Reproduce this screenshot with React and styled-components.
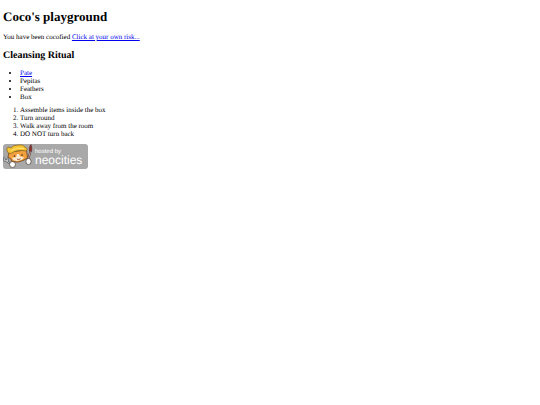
import React from "react";
import styled, { createGlobalStyle } from "styled-components";

const App = () => {
  return (
    <>
      <GlobalStyle />
      <Page>
        <Title>Coco's playground</Title>
        <Intro>
          You have been cocofied <Link href="#risk">Click at your own risk...</Link>
        </Intro>
        <Subtitle>Cleansing Ritual</Subtitle>
        <Items>
          <li>
            <Link href="#pate">Pate</Link>
          </li>
          <li>Pepitas</li>
          <li>Feathers</li>
          <li>Box</li>
        </Items>
        <Steps>
          <li>Assemble items inside the box</li>
          <li>Turn around</li>
          <li>Walk away from the room</li>
          <li>DO NOT turn back</li>
        </Steps>
        <BadgeLink href="#neocities">
          <Badge />
        </BadgeLink>
      </Page>
    </>
  );
};

const Badge = () => {
  return (
    <svg width="85" height="25" viewBox="0 0 85 25" role="img" aria-label="Hosted by Neocities">
      <rect width="85" height="25" rx="3" fill="#a8a8a8" />
      {/* wrench and its paw */}
      <path
        d="M1 13L1.5 16.5L4.5 17L5 13.5M3 16.5L9 21"
        stroke="#4a4d52"
        strokeWidth="2"
        fill="none"
      />
      <path
        d="M1 13L1.5 16.5L4.5 17L5 13.5M3 16.5L9 21"
        stroke="#e2e4e6"
        strokeWidth="0.8"
        fill="none"
      />
      <circle cx="9.5" cy="20.5" r="3" fill="#fff" stroke="#4a3a30" strokeWidth="0.7" />
      {/* cat head */}
      <path
        d="M6 8L5 13L8 15L8.5 17Q15 19.5 20 16.5L24.5 14L23.5 6Z"
        fill="#f2a03d"
        stroke="#6b4420"
        strokeWidth="0.8"
      />
      <path d="M9 14Q11 13 13 13.5L14 10L16 10L17 12.5Q20 12 21 14Q17 18 11 16.5Z" fill="#fbe9d3" />
      <path
        d="M4 7Q3.5 4 5 3L8 4Q10 1 15 1Q20 0 22 3L24.5 5L23 7Q14 5 8 9.5Q5 10 4 7Z"
        fill="#f6c434"
        stroke="#80601d"
        strokeWidth="0.7"
      />
      <path d="M8 6.5Q14 3 21 4.5" stroke="#ffe681" strokeWidth="0.9" fill="none" />
      <circle cx="11.5" cy="12" r="0.8" fill="#38251b" />
      <circle cx="19" cy="11" r="0.8" fill="#38251b" />
      <path d="M14 15Q16 16.5 17.5 14.5" stroke="#7a3d25" strokeWidth="0.8" fill="none" />
      {/* brush and its paw */}
      <path d="M25 16L27.5 7" stroke="#5b3230" strokeWidth="2" />
      <path d="M25 16L27.5 7" stroke="#e9d9d0" strokeWidth="0.7" />
      <path d="M26.5 7Q25.5 3 28 0.5Q29.5 4 28.5 7.5Z" fill="#8d2f2c" stroke="#552420" strokeWidth="0.5" />
      <ellipse cx="25.5" cy="17.5" rx="2.6" ry="3.1" fill="#fff" stroke="#4a3a30" strokeWidth="0.7" />
      <BadgeText x="32" y="9" $size={6}>
        hosted by
      </BadgeText>
      <BadgeText x="32" y="20" $size={12}>
        neocities
      </BadgeText>
    </svg>
  );
};

const GlobalStyle = createGlobalStyle`
  body {
    margin: 0;
    background: #fff;
    color: #000;
    font-family: "Liberation Serif", "Times New Roman", serif;
    font-size: 7px;
    line-height: 8px;
    text-rendering: geometricPrecision;
  }
`;

const Page = styled.main`
  padding: 0 3px;
`;

const Title = styled.h1`
  margin: 9px 0 8px;
  font-size: 13px;
  line-height: 16px;
`;

const Intro = styled.p`
  margin: 8px 0;
`;

const Subtitle = styled.h2`
  margin: 9px 0 7px;
  font-size: 10px;
  line-height: 12px;
`;

const Items = styled.ul`
  margin: 7px 0 5px;
  padding-left: 17px;
`;

const Steps = styled.ol`
  margin: 5px 0 6px;
  padding-left: 17px;
`;

const Link = styled.a`
  color: #0000ee;
  text-decoration: underline;
`;

const BadgeLink = styled.a`
  display: inline-block;
  svg {
    display: block;
  }
`;

const BadgeText = styled.text`
  fill: #fff;
  font-family: "Liberation Sans", Arial, sans-serif;
  font-size: ${(props) => props.$size}px;
`;

export default App;
